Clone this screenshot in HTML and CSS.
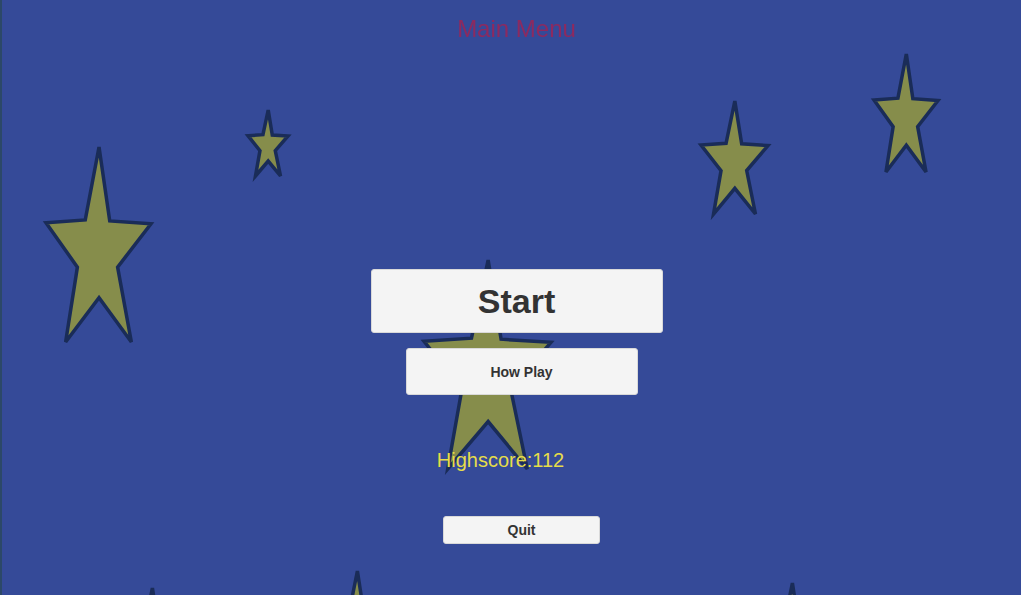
FILE: index.html
```html
<!DOCTYPE html>
<html lang="en">
<head>
    <meta charset="UTF-8">
    <meta name="viewport" content="width=device-width, initial-scale=1.0">
    <title>Main Menu</title>
    <link rel="stylesheet" href="styles.css">
</head>
<body>
    <div class="screen">
        <!-- fondo con estrellas -->
        <svg class="sky" viewBox="0 0 1021 595" xmlns="http://www.w3.org/2000/svg">
            <defs>
                <symbol id="star" viewBox="0 0 100 100" preserveAspectRatio="none" overflow="visible">
                    <polygon class="star-shape" points="50.5,0 60.7,37.9 100,39.4 68.2,61.6 81.3,100 50.5,77.3 18.7,100 29.9,61.6 0,38.9 37.4,37.4"/>
                </symbol>
            </defs>
            <use href="#star" x="46" y="147" width="105" height="195"/>
            <use href="#star" x="248" y="110" width="40" height="66"/>
            <use href="#star" x="701" y="101" width="67" height="113"/>
            <use href="#star" x="874" y="54" width="64" height="118"/>
            <use href="#star" x="424" y="260" width="127" height="209"/>
            <use href="#star" x="112" y="588" width="80" height="140"/>
            <use href="#star" x="317" y="571" width="80" height="140"/>
            <use href="#star" x="752" y="583" width="80" height="140"/>
        </svg>

        <h1 class="title">Main Menu</h1>

        <div class="menu">
            <button class="btn btn-start">Start</button>
            <button class="btn btn-how">How Play</button>
            <p class="highscore">Highscore:<span id="highscore">112</span></p>
            <button class="btn btn-quit">Quit</button>
        </div>
    </div>
</body>
</html>
```

FILE: styles.css
```css
body {
    margin: 0;
    background-color: #354a98;
    font-family: "Liberation Sans", Arial, sans-serif;
    overflow: hidden;
}

.screen {
    position: relative;
    height: 595px;
    border-left: 2px solid #2c4868;
}

/* capa de estrellas detras del menu */
.sky {
    position: absolute;
    top: 0;
    left: -2px;
    width: 1021px;
    height: 595px;
}

.star-shape {
    fill: #868d4b;
    stroke: #1a2c58;
    stroke-width: 3.5;
    stroke-linejoin: miter;
    vector-effect: non-scaling-stroke;
}

.title {
    position: relative;
    margin: 0;
    padding: 15px 0 0 10px;
    font-size: 24px;
    line-height: 28px;
    font-weight: normal;
    text-align: center;
    color: #8c2a60;
    filter: blur(0.7px);
}

.menu {
    position: relative;
    display: flex;
    flex-direction: column;
    align-items: center;
    margin-top: 226px;
}

.btn {
    display: flex;
    align-items: center;
    justify-content: center;
    padding: 0;
    background-color: #f4f4f4;
    color: #333;
    border: 1px solid #d9d9d9;
    border-radius: 3px;
    font-family: "Liberation Sans", Arial, sans-serif;
    font-weight: bold;
    cursor: pointer;
}

.btn-start {
    width: 292px;
    height: 64px;
    font-size: 34px;
    margin-left: 10px;
}

.btn-how {
    width: 232px;
    height: 47px;
    margin-top: 15px;
    margin-left: 20px;
    font-size: 14px;
}

.highscore {
    margin: 53px 22px 0 0;
    font-size: 20px;
    line-height: 24px;
    color: #e6dd4a;
}

.btn-quit {
    width: 157px;
    height: 28px;
    margin-top: 44px;
    margin-left: 20px;
    font-size: 14px;
}
```
